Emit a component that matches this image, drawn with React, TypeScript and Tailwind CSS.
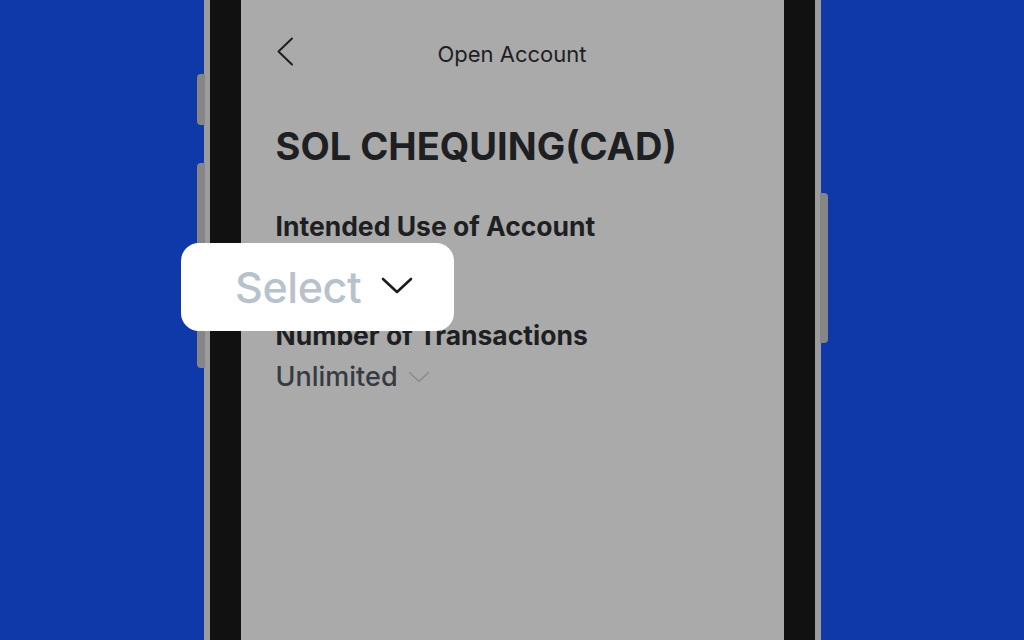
const font = { fontFamily: 'Inter, "Noto Sans", sans-serif' }

function SmallChevron() {
  return (
    <svg width="22" height="12" viewBox="0 0 22 12" fill="none">
      <path d="M1.5 1.5 L11 10.5 L20.5 1.5" stroke="#868b93" strokeWidth="1.4" strokeLinecap="round" strokeLinejoin="round" />
    </svg>
  )
}

function Field({ label, value }: { label: string; value?: string }) {
  return (
    <div>
      <p className="text-[26.5px] font-bold leading-[32px] text-[#1e1f22]">{label}</p>
      {value ? (
        <div className="mt-[10px] flex h-[32px] items-center gap-[10px]">
          <span className="text-[27px] font-medium leading-[32px] text-[#363a42]">{value}</span>
          <SmallChevron />
        </div>
      ) : (
        <div className="mt-[10px] h-[32px]" />
      )}
    </div>
  )
}

export default function App() {
  return (
    <div className="relative flex h-[640px] w-[1024px] justify-center overflow-hidden bg-[#0f38a8]" style={font}>
      <div className="relative h-[640px] w-[617px]">
        {/* side buttons */}
        <div className="absolute left-[-7px] top-[74px] h-[51px] w-[8px] rounded-l-[4px] bg-[#868686]" />
        <div className="absolute left-[-7px] top-[163px] h-[205px] w-[8px] rounded-l-[4px] bg-[#868686]" />
        <div className="absolute right-[-7px] top-[193px] h-[150px] w-[8px] rounded-r-[4px] bg-[#868686]" />

        <div className="flex h-full border-x-[6px] border-[#9c9c9c] bg-[#111111] px-[31px]">
          <div className="flex-1 bg-[#aaaaaa]">
            <div className="relative mt-[36px] flex h-[36px] items-center justify-center">
              <svg width="18" height="29" viewBox="0 0 18 29" fill="none" className="absolute left-[35px] top-[1px]">
                <path d="M16 1.5 L2.5 14.5 L16 27.5" stroke="#1e1f22" strokeWidth="2" strokeLinecap="round" strokeLinejoin="round" />
              </svg>
              <span className="text-[22px] leading-[28px] text-[#1e1f22]">Open Account</span>
            </div>

            <div className="px-[35px]">
              <h1 className="mt-[51px] text-[38px] font-bold leading-[46px] text-[#1e1f22]">SOL CHEQUING(CAD)</h1>

              <div className="mt-[41px] flex flex-col gap-[35px]">
                <Field label="Intended Use of Account" />
                <Field label="Number of Transactions" value="Unlimited" />
              </div>
            </div>
          </div>
        </div>
      </div>

      {/* magnified select */}
      <div className="absolute left-[181px] top-[243px] flex h-[88px] w-[273px] items-center gap-[20px] rounded-[18px] bg-white pl-[54px]">
        <span className="text-[43px] font-medium leading-none tracking-[-0.4px] text-[#b8c2cc]">Select</span>
        <svg width="32" height="18" viewBox="0 0 32 18" fill="none" className="mt-[-2px]">
          <path d="M2 2 L16 15 L30 2" stroke="#1c1c1e" strokeWidth="2.6" strokeLinecap="round" strokeLinejoin="round" />
        </svg>
      </div>
    </div>
  )
}
